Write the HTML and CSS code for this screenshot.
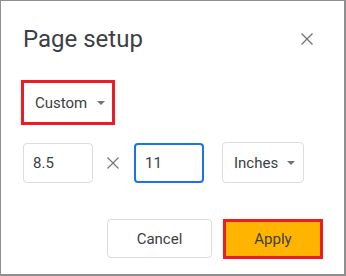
FILE: index.html
```html
<!DOCTYPE html>
<html lang="en">
<head>
    <meta charset="UTF-8">
    <title>Page setup</title>
    <link rel="stylesheet" href="styles.css">
</head>
<body>

    <div class="dialog">
        <!-- Header -->
        <div class="dialog-header">
            <h1>Page setup</h1>
            <button class="close-btn" aria-label="Close">
                <svg width="12" height="12" viewBox="0 0 12 12">
                    <path d="M0.5 0.5 L11.5 11.5 M11.5 0.5 L0.5 11.5" stroke="#6f7377" stroke-width="1.3" fill="none"/>
                </svg>
            </button>
        </div>

        <!-- Paper size -->
        <div class="size-select highlight">
            <span>Custom</span>
            <span class="caret"></span>
        </div>

        <!-- Dimensions -->
        <div class="dims-row">
            <div class="field">8.5</div>
            <svg class="times" width="12" height="12" viewBox="0 0 12 12">
                <path d="M0.5 0.5 L11.5 11.5 M11.5 0.5 L0.5 11.5" stroke="#6f7377" stroke-width="1.1" fill="none"/>
            </svg>
            <div class="field focused">11</div>
            <div class="unit-select">
                <span>Inches</span>
                <span class="caret"></span>
            </div>
        </div>

        <!-- Actions -->
        <div class="actions">
            <button class="btn btn-cancel">Cancel</button>
            <button class="btn btn-apply highlight">Apply</button>
        </div>
    </div>

</body>
</html>
```

FILE: styles.css
```css
:root {
    --text-color: #3c4043;
    --icon-color: #6f7377;
    --line-color: #dadce0;
    --focus-color: #1a73e8;
    --mark-color: #ed1c24;
    --apply-color: #ffb500;
}

* {
    margin: 0;
    padding: 0;
    box-sizing: border-box;
}

body {
    font-family: Roboto, "Liberation Sans", sans-serif;
    color: var(--text-color);
    background: #ffffff;
}

.dialog {
    width: 346px;
    height: 276px;
    border: 1px solid #8f8f8f;
    border-right-width: 2px;
    border-bottom-width: 2px;
    padding: 24px 21px 0 20px;
}

/* Header */
.dialog-header {
    display: flex;
    justify-content: space-between;
    align-items: flex-start;
    height: 28px;
}

.dialog-header h1 {
    font-size: 24px;
    font-weight: 400;
    line-height: 28px;
    margin-left: 2px;
    color: var(--text-color);
}

.close-btn {
    border: none;
    background: none;
    width: 12px;
    height: 12px;
    margin-top: 8px;
    margin-right: 10px;
    display: flex;
}

.caret {
    width: 0;
    height: 0;
    border-left: 4px solid transparent;
    border-right: 4px solid transparent;
    border-top: 4px solid var(--icon-color);
}

.highlight {
    border: 3px solid var(--mark-color);
}

/* Custom size */
.size-select {
    display: inline-flex;
    align-items: center;
    gap: 10px;
    margin-top: 27px;
    height: 45px;
    width: 94px;
    padding: 0 0 0 11px;
    font-size: 15px;
}

/* Width x height */
.dims-row {
    display: flex;
    align-items: center;
    margin-top: 17px;
    margin-left: 2px;
    height: 41px;
}

.field {
    width: 70px;
    height: 40px;
    border: 1px solid var(--line-color);
    border-radius: 4px;
    font-size: 15px;
    line-height: 38px;
    padding-left: 9px;
}

.field.focused {
    border: 2px solid var(--focus-color);
    line-height: 36px;
}

.times {
    margin: 0 15px 0 14px;
}

.unit-select {
    display: flex;
    align-items: center;
    justify-content: space-between;
    width: 82px;
    height: 41px;
    margin-left: 18px;
    border: 1px solid var(--line-color);
    border-radius: 4px;
    padding: 0 8px 0 11px;
    font-size: 15px;
}

/* Buttons */
.actions {
    display: flex;
    justify-content: flex-end;
    gap: 11px;
    margin-top: 36px;
}

.btn {
    font-family: Roboto, "Liberation Sans", sans-serif;
    font-size: 15px;
    color: var(--text-color);
    cursor: pointer;
}

.btn-cancel {
    width: 105px;
    height: 39px;
    background: #ffffff;
    border: 1px solid var(--line-color);
    border-radius: 4px;
}

.btn-apply {
    width: 100px;
    height: 40px;
    background: var(--apply-color);
    border-color: var(--mark-color);
}
```
